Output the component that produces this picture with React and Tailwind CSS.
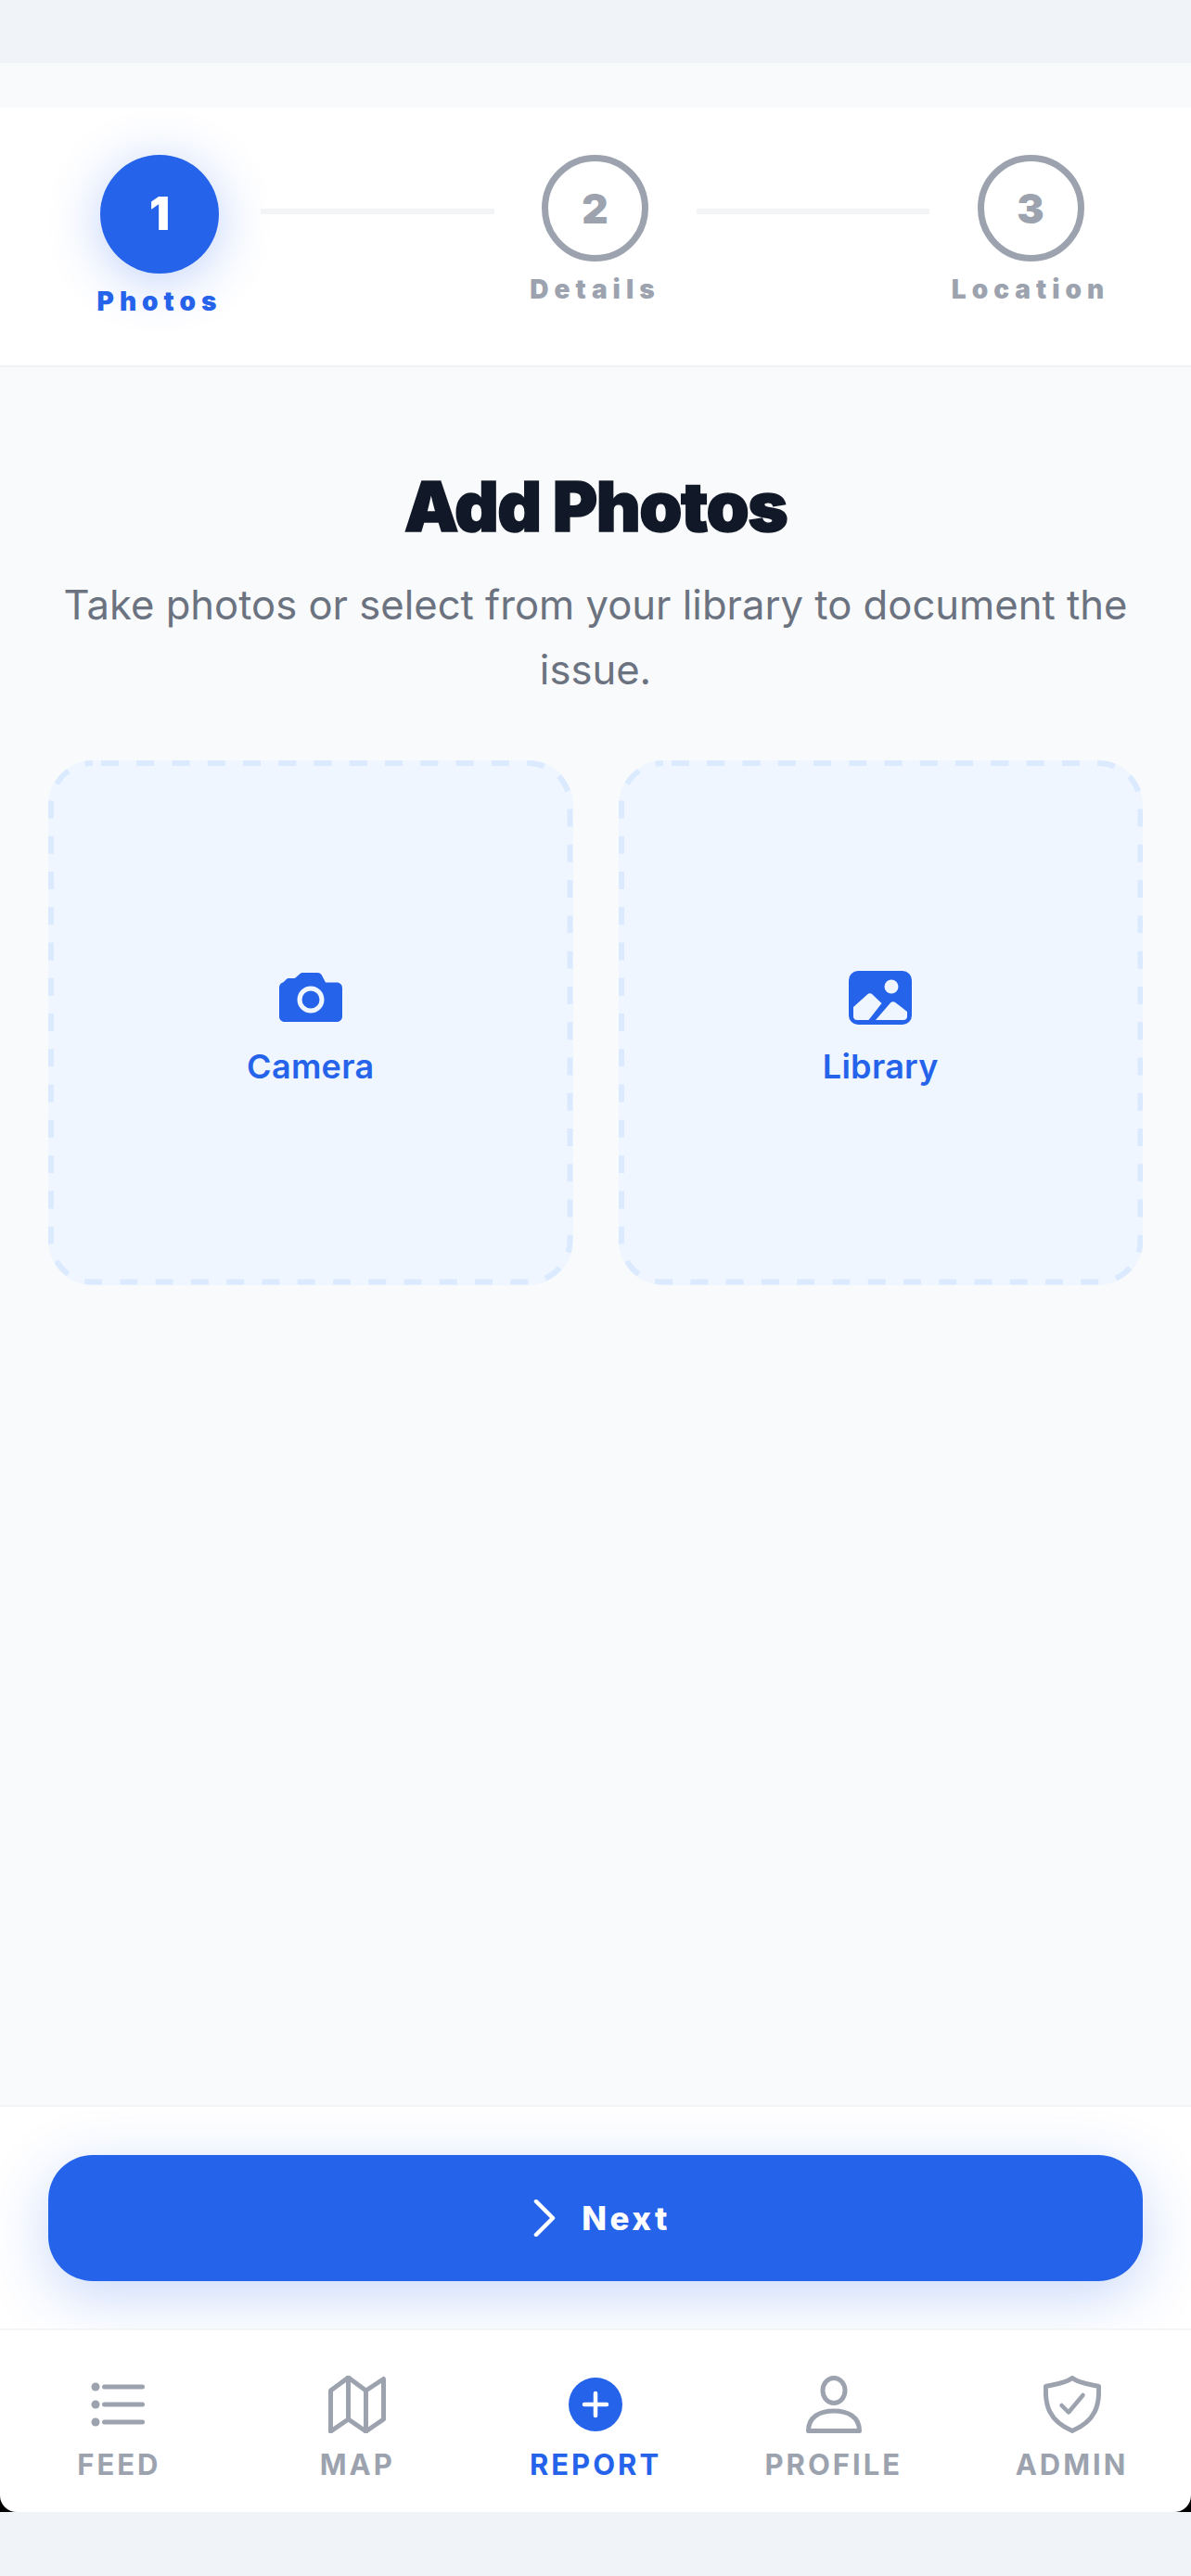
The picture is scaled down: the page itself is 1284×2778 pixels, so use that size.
import React from "react";

const font = { fontFamily: "Inter, 'Liberation Sans', sans-serif" };

function Step({ num, label, active }) {
  return (
    <div className="w-[218px] flex flex-col items-center">
      {active ? (
        <div className="w-[128px] h-[128px] rounded-full bg-[#2563eb] text-white flex items-center justify-center text-[49px] font-black shadow-[0_8px_56px_rgba(37,99,235,0.3)]">
          {num}
        </div>
      ) : (
        <div className="w-[115px] h-[115px] rounded-full bg-white border-[7px] border-[#9ca3af] text-[#9ca3af] flex items-center justify-center text-[44px] font-black">
          {num}
        </div>
      )}
      <div className={"mt-[14px] text-[28px] leading-[32px] font-black tracking-[6px] " + (active ? "text-[#2563eb]" : "text-[#9ca3af]")}>
        {label}
      </div>
    </div>
  );
}

function CameraIcon() {
  return (
    <svg width="68" height="54" viewBox="0 0 68 54" className="text-[#2563eb]">
      <path
        fill="currentColor"
        d="M22 1.500C23 .5 24 0 25.500 0h16c1.600 0 3 .7 4 2l4.500 8.500H62c3.500 0 6 2.500 6 6V47c0 3.500-2.500 6-6 6H6c-3.500 0-6-2.500-6-6V16c0-3 1.800-5.200 4.500-5.800l3.300-3.200c.8-.8 1.700-1 2.700-1h5.500c.9 0 1.500-.3 2-1z"
      />
      <circle cx="34" cy="29" r="12" fill="none" stroke="#eff6ff" strokeWidth="5" />
    </svg>
  );
}

function LibraryIcon() {
  return (
    <svg width="68" height="58" viewBox="0 0 68 58">
      <rect width="68" height="58" rx="10" fill="#2563eb" />
      <circle cx="46" cy="17" r="7.500" fill="#eff6ff" />
      <path
        fill="#eff6ff"
        d="M5 39l15-13.500c1.800-1.600 4-1.600 5.600 0l9.900 9.500L21.500 53H9c-2.500 0-4-1.500-4-4z"
      />
      <path
        fill="#eff6ff"
        d="M29 53l16-18.500c1.500-1.700 3.800-1.700 5.500-.3L63 44v5c0 2.500-1.500 4-4 4z"
      />
    </svg>
  );
}

function UploadCard({ icon, label }) {
  return (
    <div className="relative aspect-square rounded-[48px] bg-[#eff6ff] flex flex-col items-center justify-center pt-[14px]">
      {/* dashes are longer than what the browser gives for border-dashed */}
      <svg className="absolute inset-0 w-full h-full" viewBox="0 0 566 566" fill="none">
        <rect x="3" y="3" width="560" height="560" rx="45" stroke="#dbeafe" strokeWidth="6" strokeDasharray="19 19.300" strokeDashoffset="-9" />
      </svg>
      <div className="h-[58px] flex items-center">{icon}</div>
      <div className="mt-[23px] text-[36px] leading-[44px] font-semibold tracking-[0.3px] text-[#2563eb]">{label}</div>
    </div>
  );
}

function FeedIcon() {
  return (
    <svg width="62" height="62" viewBox="0 0 62 62" fill="#9ca3af">
      <circle cx="6" cy="12" r="4.500" />
      <circle cx="6" cy="31" r="4.500" />
      <circle cx="6" cy="50" r="4.500" />
      <rect x="13" y="9.500" width="46" height="5" rx="2.500" />
      <rect x="13" y="28.500" width="46" height="5" rx="2.500" />
      <rect x="13" y="47.500" width="46" height="5" rx="2.500" />
    </svg>
  );
}

function MapIcon() {
  return (
    <svg width="62" height="62" viewBox="0 0 62 62" fill="none" stroke="#9ca3af" strokeWidth="5" strokeLinejoin="round" strokeLinecap="round">
      <path d="M2.500 16L21.500 2l19 14L59.500 3.500V47L40.500 60 21.500 47 2.500 60z" />
      <path d="M21.500 2v45M40.500 16v44" />
    </svg>
  );
}

function PlusIcon() {
  return (
    <svg width="62" height="62" viewBox="0 0 62 62">
      <circle cx="31" cy="31" r="29" fill="#2563eb" />
      <path d="M31 19v24M19 31h24" stroke="#fff" strokeWidth="4.500" strokeLinecap="round" />
    </svg>
  );
}

function ProfileIcon() {
  return (
    <svg width="62" height="62" viewBox="0 0 62 62" fill="none" stroke="#9ca3af" strokeWidth="5" strokeLinejoin="round">
      <ellipse cx="31" cy="16" rx="12" ry="13.500" />
      <path d="M3.500 59.500c0-15 12-21.500 27.500-21.500s27.500 6.500 27.500 21.500z" />
    </svg>
  );
}

function ShieldIcon() {
  return (
    <svg width="62" height="62" viewBox="0 0 62 62" fill="none" stroke="#9ca3af" strokeLinejoin="round" strokeLinecap="round">
      <path strokeWidth="5" d="M31 2.500C24 8 12 9.500 2.500 11.500c-1 20 3 37 28.500 48 25.500-11 29.500-28 28.500-48C50 9.500 38 8 31 2.500z" />
      <path strokeWidth="4.500" d="M19.500 32l7.500 7.500L42.500 21" />
    </svg>
  );
}

function NavItem({ icon, label, active }) {
  return (
    <div className="flex flex-col items-center">
      {icon}
      <div className={"mt-[16px] text-[31px] leading-[36px] font-bold tracking-[3px] " + (active ? "text-[#2563eb]" : "text-[#9ca3af]")}>
        {label}
      </div>
    </div>
  );
}

export default function App() {
  return (
    <div style={font} className="h-[2778px] flex flex-col bg-[#f0f3f8]">
      <div className="h-[68px] shrink-0" />
      <div className="h-[48px] shrink-0 bg-[#f9fafb]" />

      <div className="h-[280px] shrink-0 bg-white border-b-2 border-[#f0f1f3] pl-[63px] pr-[64px] pt-[51px] flex items-start">
        <Step num="1" label="Photos" active />
        <div className="flex-1 h-[6px] mt-[58px] bg-[#f3f4f6]" />
        <Step num="2" label="Details" />
        <div className="flex-1 h-[6px] mt-[58px] bg-[#f3f4f6]" />
        <Step num="3" label="Location" />
      </div>

      <div className="flex-1 bg-[#f9fafb] px-[52px] pt-[106px]">
        <h1 className="text-center text-[74px] leading-[88px] font-black tracking-[-1.5px] text-[#111827] [-webkit-text-stroke:1.5px_#111827]">Add Photos</h1>
        <p className="mt-[28px] text-center text-[43.6px] leading-[70px] text-[#6b7280]">
          Take photos or select from your library to document the issue.
        </p>
        <div className="mt-[62px] grid grid-cols-2 gap-[49px]">
          <UploadCard icon={<CameraIcon />} label="Camera" />
          <UploadCard icon={<LibraryIcon />} label="Library" />
        </div>
      </div>

      <div className="h-[241px] shrink-0 bg-white border-t-2 border-[#f3f4f6] px-[52px] pt-[52px]">
        <div className="h-[136px] pl-[14px] rounded-[48px] bg-[#2563eb] flex items-center justify-center text-white shadow-[0_16px_64px_rgba(37,99,235,0.25)]">
          <svg width="24" height="40" viewBox="0 0 24 40" fill="none" stroke="#fff" strokeWidth="4.500" strokeLinecap="round" strokeLinejoin="round">
            <path d="M3 2l18 18L3 38" />
          </svg>
          <span className="ml-[28px] text-[35px] font-extrabold tracking-[3.500px]">Next</span>
        </div>
      </div>

      <div className="h-[198px] shrink-0 bg-black">
        <div className="h-full bg-white border-t-2 border-[#f3f4f6] rounded-b-[18px] pt-[49px] grid grid-cols-5">
          <NavItem icon={<FeedIcon />} label="FEED" />
          <NavItem icon={<MapIcon />} label="MAP" />
          <NavItem icon={<PlusIcon />} label="REPORT" active />
          <NavItem icon={<ProfileIcon />} label="PROFILE" />
          <NavItem icon={<ShieldIcon />} label="ADMIN" />
        </div>
      </div>

      <div className="h-[69px] shrink-0" />
    </div>
  );
}
